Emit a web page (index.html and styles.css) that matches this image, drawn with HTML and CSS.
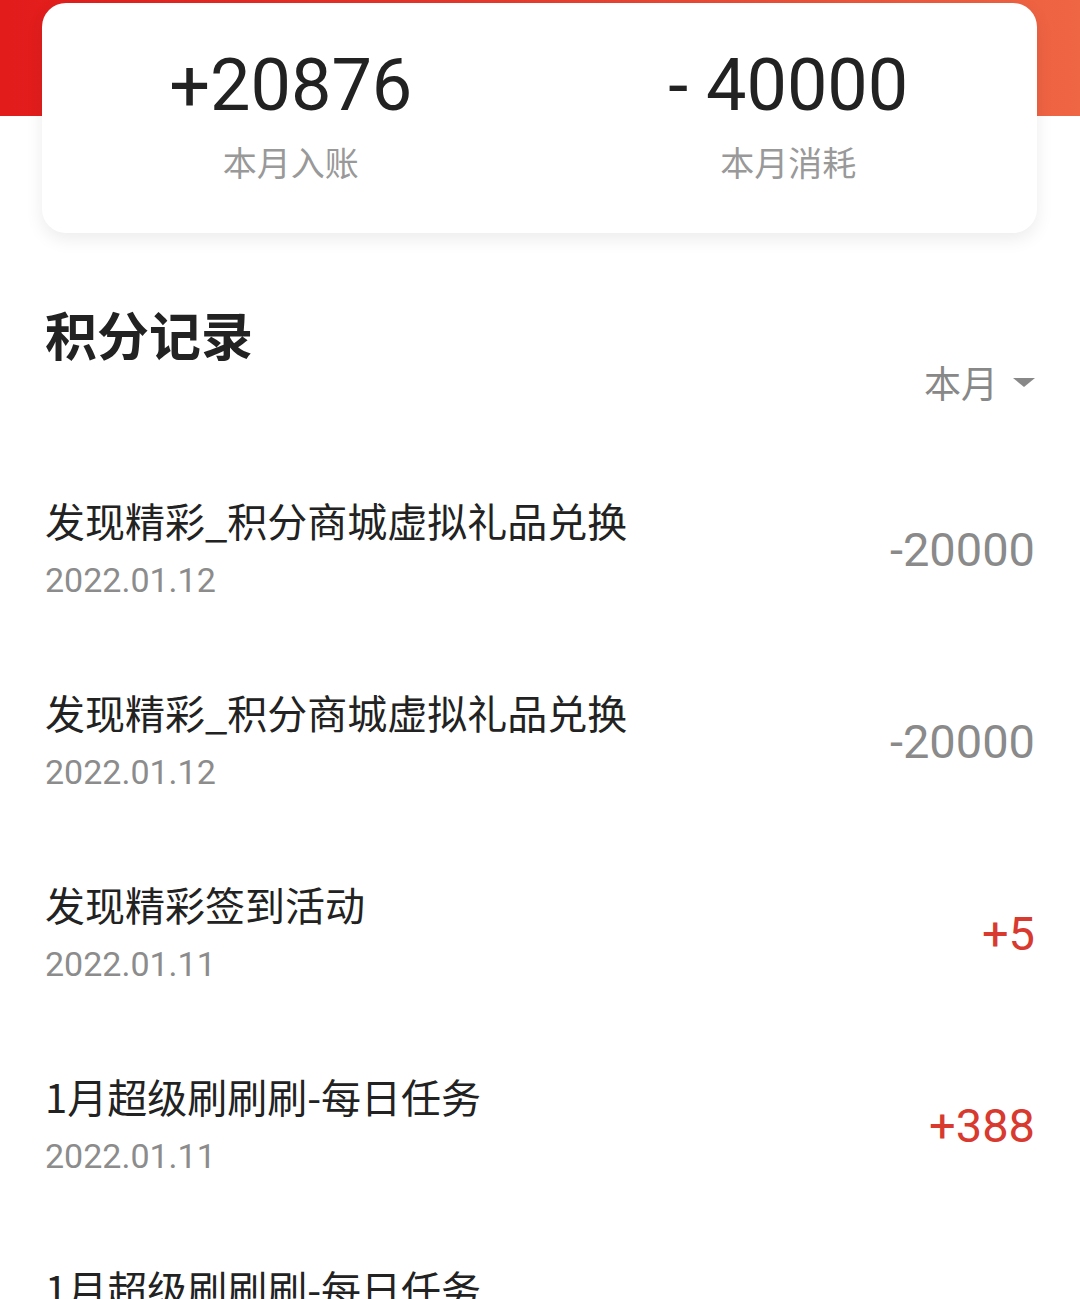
FILE: index.html
```html
<!DOCTYPE html>
<html lang="zh-CN">
<head>
    <meta charset="UTF-8">
    <title>积分记录</title>
    <link rel="stylesheet" href="styles.css">
</head>
<body>
<div class="hero">
    <div class="summary">
        <div class="cell">
            <div class="num">+20876</div>
            <div class="label">本月入账</div>
        </div>
        <div class="cell">
            <div class="num">- 40000</div>
            <div class="label">本月消耗</div>
        </div>
    </div>
</div>

<h2 class="title">积分记录</h2>
<div class="filter">本月<span class="arrow"></span></div>

<ul class="records">
    <li><div class="info"><div class="name">发现精彩_积分商城虚拟礼品兑换</div><div class="date">2022.01.12</div></div><div class="amount">-20000</div></li>
    <li><div class="info"><div class="name">发现精彩_积分商城虚拟礼品兑换</div><div class="date">2022.01.12</div></div><div class="amount">-20000</div></li>
    <li><div class="info"><div class="name">发现精彩签到活动</div><div class="date">2022.01.11</div></div><div class="amount plus">+5</div></li>
    <li><div class="info"><div class="name">1月超级刷刷刷-每日任务</div><div class="date">2022.01.11</div></div><div class="amount plus">+388</div></li>
    <li><div class="info"><div class="name">1月超级刷刷刷-每日任务</div><div class="date">2022.01.11</div></div><div class="amount plus">+388</div></li>
</ul>
</body>
</html>
```

FILE: styles.css
```css
html, body{ margin:0; padding:0; background:#fff; }
body{ font-family:Roboto, "Noto Sans CJK SC", sans-serif; color:#222; overflow:hidden; height:1299px; }

.hero{ padding-top:3px; background:linear-gradient(90deg, #e21b1b 0%, #e6392c 45%, #ef6644 100%) no-repeat; background-size:100% 116px; }
.summary{ margin:0 43px 0 42px; height:230px; box-sizing:border-box; padding-top:41px; background:#fff; border-radius:24px; box-shadow:0 6px 18px rgba(0,0,0,0.08); display:flex; }
.summary .cell{ flex:1; text-align:center; }
.summary .num{ font-size:72px; line-height:84px; color:#222; }
.summary .label{ margin-top:10px; font-size:34px; line-height:48px; color:#999; font-family:"Noto Sans CJK SC", sans-serif; }

.title{ margin:77px 0 0 45px; font-size:52px; line-height:48px; font-weight:bold; font-family:"Noto Sans CJK SC", sans-serif; color:#222; }
.filter{ display:flex; justify-content:flex-end; align-items:center; margin-right:45px; font-size:37px; line-height:48px; color:#888; font-family:"Noto Sans CJK SC", sans-serif; }
.filter .arrow{ width:0; height:0; margin-left:15px; border-left:11px solid transparent; border-right:11px solid transparent; border-top:9px solid #888; }

.records{ list-style:none; margin:48px 0 0; padding:0; }
.records li{ display:flex; align-items:center; justify-content:space-between; padding:36px 45px 36px 45px; }
.records .name{ font-size:40px; line-height:60px; color:#222; font-family:"Noto Sans CJK SC", sans-serif; }
.records .date{ font-size:34px; line-height:60px; color:#8c8c8c; }
.records .amount{ font-size:47px; line-height:60px; color:#8a8a8a; }
.records .amount.plus{ color:#d83a30; }
```
